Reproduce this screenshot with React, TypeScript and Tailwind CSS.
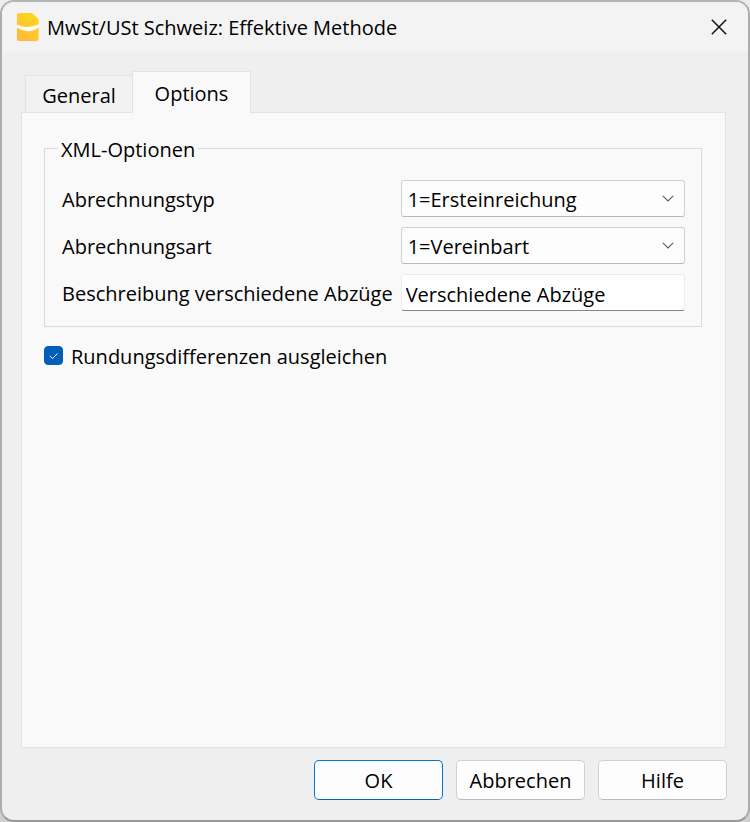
import { useState } from "react";

const tabs = ["General", "Options"];

function AppIcon() {
  return (
    <svg className="h-7 w-[22px] shrink-0" viewBox="0 0 22 28" aria-hidden="true">
      <defs>
        <linearGradient id="sheet" x1="0.8" y1="0" x2="0.2" y2="1">
          <stop offset="0" stopColor="#ffd91c" />
          <stop offset="1" stopColor="#ffb83d" />
        </linearGradient>
      </defs>
      <path
        d="M2.2 0H14.2Q15.2 0 15.9 0.7L20.9 5.2Q21.6 5.9 21.6 7V25.8Q21.6 28 19.4 28H2.2Q0 28 0 25.8V2.2Q0 0 2.2 0Z"
        fill="url(#sheet)"
      />
      <path d="M0 11.4Q10.5 16.6 22 11.2V14Q17 18.4 10.8 18.2Q5 18 0 14.6Z" fill="#fffdf8" />
    </svg>
  );
}

function SelectField({ id, label, options }: { id: string; label: string; options: string[] }) {
  return (
    <>
      <label htmlFor={id} className="pt-0.5 pl-px">
        {label}
      </label>
      <div className="relative">
        <select
          id={id}
          className="block h-[37px] w-full appearance-none rounded-[3px] border border-[#d1d1d1] border-b-[#b9b9b9] bg-[#fdfdfd] pt-0.5 pr-8 pl-1.5 outline-none"
        >
          {options.map((o) => (
            <option key={o}>{o}</option>
          ))}
        </select>
        <svg
          className="pointer-events-none absolute top-[15px] right-[11px] h-2 w-3"
          viewBox="0 0 12 8"
          fill="none"
          stroke="#5f5f5f"
          strokeWidth="1.1"
          aria-hidden="true"
        >
          <path d="M0.8 0.8L6 6L11.2 0.8" />
        </svg>
      </div>
    </>
  );
}

export default function App() {
  const [active, setActive] = useState("Options");
  const button =
    "h-10 w-[129px] rounded-[5px] border border-[#d0d0d0] border-b-[#bababa] bg-[#fdfdfd] pt-0.5 text-center";

  return (
    <div className="min-h-screen bg-gradient-to-b from-[#ededed] to-[#cfcfcf] font-['Open_Sans','Noto_Sans',sans-serif] text-[20px] leading-7 text-black">
      <main className="flex min-h-screen flex-col overflow-hidden rounded-[14px] border-2 border-[#acacac] border-t-[#b5b5b5] border-b-[#999999] bg-[#efefef]">
        <header className="flex h-[50px] shrink-0 items-center gap-2 bg-[#f3f3f3] pr-[21px] pl-[15px]">
          <AppIcon />
          <h1 className="flex-1 pt-0.5">MwSt/USt Schweiz: Effektive Methode</h1>
          <button type="button" aria-label="Schliessen">
            <svg
              className="h-4 w-4"
              viewBox="0 0 16 16"
              fill="none"
              stroke="#111111"
              strokeWidth="1.5"
              aria-hidden="true"
            >
              <path d="M0.8 0.8L15.2 15.2M15.2 0.8L0.8 15.2" />
            </svg>
          </button>
        </header>

        <form
          className="flex flex-1 flex-col pt-[19px] pr-[22px] pb-5 pl-[19px]"
          onSubmit={(e) => e.preventDefault()}
        >
          <div role="tablist" className="-mb-px flex items-end pl-1">
            {tabs.map((tab) => (
              <button
                key={tab}
                type="button"
                role="tab"
                aria-selected={tab === active}
                onClick={() => setActive(tab)}
                className={
                  tab === active
                    ? "z-10 -ml-px h-[42px] w-[119px] border border-b-0 border-[#e3e3e3] bg-[#f9f9f9] pt-0.5"
                    : "h-[38px] w-[108px] border border-[#e3e3e3] bg-[#f2f2f2] pt-1"
                }
              >
                {tab}
              </button>
            ))}
          </div>

          <section
            role="tabpanel"
            aria-label={active}
            className="flex-1 border border-[#e3e3e3] bg-[#f9f9f9] pt-[19px] pr-[23px] pl-[22px]"
          >
            <fieldset className="border border-[#dadada] px-4 pb-[15px]">
              <legend className="-ml-[3px] px-[3px] pt-1">XML-Optionen</legend>
              <div className="grid grid-cols-[auto_1fr] items-center gap-x-2 gap-y-2.5 pt-4">
                <SelectField
                  id="typ"
                  label="Abrechnungstyp"
                  options={["1=Ersteinreichung", "2=Korrekturabrechnung", "3=Jahresabstimmung"]}
                />
                <SelectField id="art" label="Abrechnungsart" options={["1=Vereinbart", "2=Vereinnahmt"]} />
                <label htmlFor="abzuege" className="pt-0.5 pl-px">
                  Beschreibung verschiedene Abzüge
                </label>
                <input
                  id="abzuege"
                  type="text"
                  defaultValue="Verschiedene Abzüge"
                  className="h-[37px] w-full min-w-0 rounded-[3px] border border-[#ececec] border-b-[#868686] bg-white px-1 pt-1 outline-none"
                />
              </div>
            </fieldset>

            <label className="mt-4 flex w-fit items-start gap-2">
              <span className="relative mt-[3px] flex">
                <input
                  type="checkbox"
                  defaultChecked
                  className="peer h-[19px] w-[19px] appearance-none rounded border border-[#8a8a8a] bg-white checked:border-[#005fb8] checked:bg-[#005fb8]"
                />
                <svg
                  className="pointer-events-none absolute inset-0 hidden h-[19px] w-[19px] peer-checked:block"
                  viewBox="0 0 19 19"
                  fill="none"
                  stroke="#ffffff"
                  strokeWidth="1"
                  aria-hidden="true"
                >
                  <path d="M5.8 10L8.5 12.5L13.5 7.5" />
                </svg>
              </span>
              Rundungsdifferenzen ausgleichen
            </label>
          </section>

          <footer className="mt-3 -mr-px flex justify-end gap-[13px]">
            <button
              type="submit"
              className="h-10 w-[129px] rounded-[5px] border border-[#0078d4] border-b-[#0067b8] bg-[#fdfdfd] pt-0.5 text-center"
            >
              OK
            </button>
            <button type="button" className={button}>
              Abbrechen
            </button>
            <button type="button" className={button}>
              Hilfe
            </button>
          </footer>
        </form>
      </main>
    </div>
  );
}
